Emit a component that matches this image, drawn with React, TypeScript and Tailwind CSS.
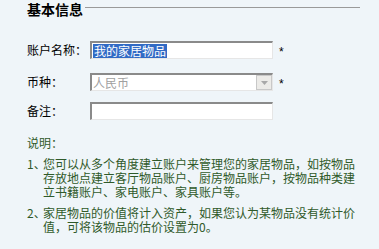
const font = "font-['SimSun','Noto_Sans_CJK_SC',sans-serif]";

function Field({ label, children, star }: { label: string; children: React.ReactNode; star?: boolean }) {
  return (
    <div className="flex items-center h-[18px]">
      <div className="w-[63px] text-[12px] text-black leading-[18px]">{label}</div>
      <div className="w-[183px] h-[18px]">{children}</div>
      {star && <div className="ml-[6px] text-[12px] font-['Liberation_Sans',sans-serif] text-black leading-[18px] pt-[3px]">*</div>}
    </div>
  );
}

const inset =
  "h-full bg-white border-t-2 border-l-2 border-b border-r border-t-[#8a8a8a] border-l-[#8a8a8a] border-b-[#e6e6e6] border-r-[#e6e6e6]";

export default function App() {
  return (
    <div className={`w-[379px] h-[249px] bg-[#eff5f9] pl-[27px] pr-[19px] ${font} overflow-hidden`}>
      <div className="flex items-center h-[18px]">
        <span className="text-[14px] font-bold text-black leading-[18px]">基本信息</span>
        <div className="flex-1 h-px bg-[#9a9a9a] ml-[2px] mt-[-3px]" />
      </div>

      <div className="mt-[23px]">
        <Field label="账户名称：" star>
          <div className={`${inset} flex items-center pl-[1px]`}>
            <span className="bg-[#316ac5] text-white text-[12px] leading-[14px] px-[1px]">我的家居物品</span>
          </div>
        </Field>
      </div>

      <div className="mt-[14px]">
        <Field label="币种：" star>
          <div className={`${inset} flex items-center`}>
            <span className="flex-1 text-[12px] leading-[14px] text-[#a0a0a0] pl-[1px]">人民币</span>
            <div className="w-[16px] h-full bg-[#ecebe8] border border-[#c8c8c8] flex items-center justify-center">
              <svg width="7" height="4" viewBox="0 0 7 4">
                <path d="M0 0h7L3.5 4z" fill="#a8a8a8" />
              </svg>
            </div>
          </div>
        </Field>
      </div>

      <div className="mt-[11px]">
        <Field label="备注：">
          <div className={inset} />
        </Field>
      </div>

      <div className="mt-[16px] text-[12px] leading-[14px] text-[#2f5a2a]">说明：</div>

      <div className="mt-[7px] flex text-[12px] leading-[14px] text-[#2f5a2a]">
        <span className="w-[16px] shrink-0">1、</span>
        <div>
          <div>您可以从多个角度建立账户来管理您的家居物品，如按物品</div>
          <div>存放地点建立客厅物品账户、厨房物品账户，按物品种类建</div>
          <div>立书籍账户、家电账户、家具账户等。</div>
        </div>
      </div>

      <div className="mt-[7px] flex text-[12px] leading-[14px] text-[#2f5a2a]">
        <span className="w-[16px] shrink-0">2、</span>
        <div>
          <div>家居物品的价值将计入资产，如果您认为某物品没有统计价</div>
          <div>值，可将该物品的估价设置为0。</div>
        </div>
      </div>
    </div>
  );
}
